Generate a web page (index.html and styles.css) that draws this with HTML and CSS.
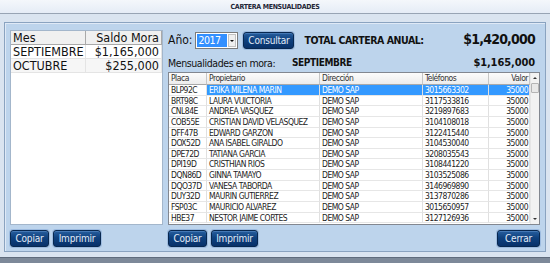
FILE: index.html
```html
<!DOCTYPE html>
<html>
<head>
    <meta charset="utf-8">
    <title>Cartera Mensualidades</title>
    <link rel="stylesheet" href="styles.css">
</head>
<body>
    <div class="titlebar">CARTERA MENSUALIDADES</div>
    <div class="window">
        <div class="panel">
            <div class="left">
                <div class="list">
                    <div class="mrow head"><span>Mes</span><span class="num">Saldo Mora</span></div>
                    <div class="mrow"><span>SEPTIEMBRE</span><span class="num">$1,165,000</span></div>
                    <div class="mrow alt"><span>OCTUBRE</span><span class="num">$255,000</span></div>
                </div>
                <div class="buttons">
                    <button class="btn btn-copiar">Copiar</button>
                    <button class="btn btn-imprimir">Imprimir</button>
                </div>
            </div>
            <div class="right">
                <div class="toolbar">
                    <span class="label">Año:</span>
                    <div class="combo">
                        <span class="combo-value">2017</span>
                        <span class="combo-arrow"><i></i></span>
                    </div>
                    <button class="btn btn-consultar">Consultar</button>
                    <span class="total-label">TOTAL CARTERA ANUAL:</span>
                    <span class="total-value">$1,420,000</span>
                </div>
                <div class="mora">
                    <span class="mora-label">Mensualidades en mora:</span>
                    <span class="mora-month">SEPTIEMBRE</span>
                    <span class="mora-value">$1,165,000</span>
                </div>
                <div class="grid">
                    <div class="grid-body" id="gridBody">
                        <div class="grow ghead">
                            <span>Placa</span>
                            <span>Propietario</span>
                            <span>Dirección</span>
                            <span>Teléfonos</span>
                            <span class="valor">Valor</span>
                        </div>
                    </div>
                    <div class="scrollbar">
                        <div class="sb-btn"><i class="up"></i></div>
                        <div class="sb-thumb"></div>
                        <div class="sb-btn sb-down"><i class="down"></i></div>
                    </div>
                </div>
                <div class="buttons">
                    <button class="btn btn-copiar">Copiar</button>
                    <button class="btn btn-imprimir2">Imprimir</button>
                    <button class="btn btn-cerrar">Cerrar</button>
                </div>
            </div>
        </div>
    </div>
    <div class="bottom-edge"></div>

    <script>
        const rows = [
            ['BLP92C', 'ERIKA MILENA MARIN', '3015663302'],
            ['BRT98C', 'LAURA VUICTORIA', '3117533816'],
            ['CNL84E', 'ANDREA VASQUEZ', '3219897683'],
            ['COB55E', 'CRISTIAN DAVID VELASQUEZ', '3104108018'],
            ['DFF47B', 'EDWARD GARZON', '3122415440'],
            ['DOX52D', 'ANA ISABEL GIRALDO', '3104530040'],
            ['DPE72D', 'TATIANA GARCIA', '3208035543'],
            ['DPI19D', 'CRISTHIAN RIOS', '3108441220'],
            ['DQN86D', 'GINNA TAMAYO', '3103525086'],
            ['DQO37D', 'VANESA TABORDA', '3146969890'],
            ['DUY32D', 'MAURIN GUTIERREZ', '3137870286'],
            ['FSP03C', 'MAURICIO ALVAREZ', '3015650957'],
            ['HBE37', 'NESTOR JAIME CORTES', '3127126936']
        ];

        const gridBody = document.getElementById('gridBody');

        rows.forEach((r, i) => {
            const row = document.createElement('div');
            row.className = i === 0 ? 'grow sel' : 'grow';
            row.innerHTML = `<span>${r[0]}</span><span>${r[1]}</span><span>DEMO SAP</span><span>${r[2]}</span><span class="valor">35000</span>`;
            gridBody.appendChild(row);
        });
    </script>
</body>
</html>
```

FILE: styles.css
```css
body {
    margin: 0;
    height: 263px;
    overflow: hidden;
    background: #dae4f0;
    font-family: "DejaVu Sans Condensed", "DejaVu Sans", sans-serif;
    color: #111;
    white-space: nowrap;
    display: flex;
    flex-direction: column;
}
.titlebar {
    height: 13px;
    line-height: 14px;
    border-bottom: 1px solid #98a4b4;
    background: linear-gradient(#f4f7fb, #e5ecf6);
    text-align: center;
    font-size: 7px;
    letter-spacing: -0.3px;
    font-weight: bold;
    color: #1e2636;
}
.window {
    padding: 8px 4px 0;
}
.panel {
    display: flex;
    gap: 5px;
    padding: 7px 4px 4px 5px;
    border: 1px solid #8aa3c0;
    background: #bdd4ec;
    box-shadow: inset 1px 1px 0 #dfe9f6;
}
.left {
    width: 153px;
    display: flex;
    flex-direction: column;
}
.list {
    height: 195px;
    box-sizing: border-box;
    border: 1px solid #a3b6cb;
    background: #fff;
}
.mrow {
    display: grid;
    grid-template-columns: 75px 76px;
    height: 14px;
    font-size: 12.5px;
}
.mrow span {
    box-sizing: border-box;
    padding: 0 2px;
    line-height: 14px;
    border-right: 1px solid #e4e4e4;
    border-bottom: 1px solid #e4e4e4;
    overflow: hidden;
}
.mrow.head span {
    background: #f0f0f0;
    border-right-color: #a9a9a9;
    border-bottom-color: #a9a9a9;
    line-height: 13px;
}
.mrow.alt span {
    background: #f6f6f6;
}
.num {
    text-align: right;
}
.right {
    width: 372px;
    display: flex;
    flex-direction: column;
}
.toolbar {
    display: flex;
    align-items: flex-start;
    height: 20px;
    padding-top: 2px;
    box-sizing: border-box;
}
.label {
    font-size: 12px;
    line-height: 17px;
}
.combo {
    margin-left: 3px;
    width: 43px;
    height: 17px;
    box-sizing: border-box;
    border: 1px solid #7b7b7b;
    background: #fff;
    display: flex;
    padding: 1px;
}
.combo-value {
    width: 30px;
    background: #3390ff;
    color: #fff;
    font-size: 10.5px;
    letter-spacing: -0.5px;
    line-height: 13px;
    padding-left: 1px;
    box-sizing: border-box;
}
.combo-arrow {
    margin-left: auto;
    width: 8px;
    box-sizing: border-box;
    border: 1px solid #c2c2c2;
    background: #efefef;
    display: flex;
    align-items: center;
    justify-content: center;
}
.combo-arrow i {
    border-left: 2px solid transparent;
    border-right: 2px solid transparent;
    border-top: 2px solid #111;
}
.btn {
    height: 17px;
    padding: 0;
    border: 1px solid #082850;
    border-radius: 3px;
    background: linear-gradient(#275e9e, #0f417e 45%, #08316a);
    box-shadow: 0 0 0 1px #9dbbe0, inset 0 1px 0 #4478b5;
    color: #e3ecf8;
    font-family: inherit;
    font-size: 10px;
    letter-spacing: -0.2px;
    line-height: 15px;
}
.btn-consultar {
    margin-left: 5px;
    width: 51px;
}
.btn-copiar {
    width: 39px;
}
.btn-imprimir {
    width: 48px;
}
.btn-imprimir2 {
    width: 47px;
}
.btn-cerrar {
    width: 43px;
    margin-left: auto;
}
.total-label {
    margin-left: 10px;
    font-size: 10.5px;
    letter-spacing: -0.45px;
    font-weight: bold;
    line-height: 17px;
}
.total-value {
    margin-left: auto;
    margin-right: 5px;
    margin-top: -1px;
    font-size: 14px;
    letter-spacing: -0.8px;
    font-weight: bold;
    line-height: 17px;
}
.mora {
    display: flex;
    align-items: flex-end;
    height: 22px;
    padding-bottom: 2px;
    box-sizing: border-box;
}
.mora span {
    line-height: 14px;
}
.mora-label {
    width: 124px;
    font-size: 10.5px;
    letter-spacing: -0.4px;
}
.mora-month {
    font-size: 10px;
    letter-spacing: -0.4px;
    font-weight: bold;
}
.mora-value {
    margin-left: auto;
    margin-right: 5px;
    font-size: 11px;
    letter-spacing: -0.1px;
    font-weight: bold;
}
.grid {
    height: 153px;
    box-sizing: border-box;
    border: 1px solid #828790;
    background: #fff;
    display: flex;
}
.grid-body {
    width: 361px;
}
.grow {
    display: grid;
    grid-template-columns: 38px 113px 103px 66px 41px;
    height: 10.65px;
    font-size: 8.5px;
    letter-spacing: -0.5px;
}
.grow span {
    box-sizing: border-box;
    padding-left: 2px;
    line-height: 10px;
    border-right: 1px solid #e0e0e0;
    border-bottom: 1px solid #e6e6e6;
    overflow: hidden;
    color: #1c1c1c;
}
.grow .valor {
    text-align: right;
    padding-right: 1px;
}
.grow.sel span + span {
    background: #3399ff;
    color: #fff;
}
.grow.ghead {
    height: 12px;
}
.grow.ghead span {
    background: linear-gradient(#fcfcfc, #ececec);
    border-right-color: #c6c6c6;
    border-bottom-color: #a9a9a9;
    line-height: 11px;
    color: #333;
}
.scrollbar {
    width: 9px;
    background: #f2f2f2;
    border-left: 1px solid #e6e6e6;
    box-sizing: border-box;
    display: flex;
    flex-direction: column;
}
.sb-btn {
    height: 10px;
    display: flex;
    align-items: center;
    justify-content: center;
}
.sb-down {
    margin-top: auto;
}
.sb-btn i {
    border-left: 2px solid transparent;
    border-right: 2px solid transparent;
}
.sb-btn i.up {
    border-bottom: 2px solid #333;
}
.sb-btn i.down {
    border-top: 2px solid #333;
}
.sb-thumb {
    height: 10px;
    box-sizing: border-box;
    border: 1px solid #b4b4b4;
    border-radius: 1px;
    background: #e8e8e8;
}
.buttons {
    display: flex;
    gap: 4px;
    margin-top: 5px;
    height: 17px;
}
.bottom-edge {
    margin-top: auto;
    height: 5px;
    border-top: 1px solid #5f6b7c;
    background: #7d8999;
}
```
